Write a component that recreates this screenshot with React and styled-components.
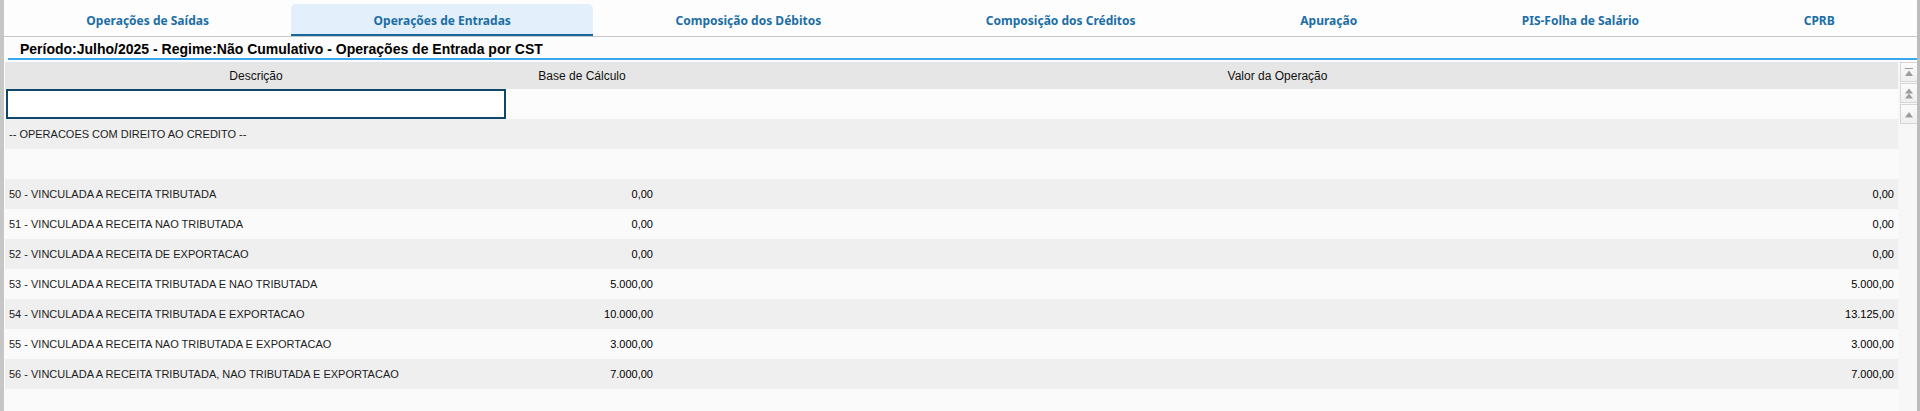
import React from "react";
import styled, { createGlobalStyle } from "styled-components";

const GlobalStyle = createGlobalStyle`
  html, body {
    margin: 0;
    padding: 0;
    background: #fcfcfc;
  }
  body {
    font-family: "Liberation Sans", Arial, sans-serif;
  }
`;

const Frame = styled.div`
  height: 411px;
  box-sizing: border-box;
  border-left: 4px solid #c6c6c6;
  border-right: 3px solid #bcbcbc;
  background: #fcfcfc;
  display: flex;
  flex-direction: column;
  overflow: hidden;
`;

const TabBar = styled.div`
  display: flex;
  height: 37px;
  padding-top: 4px;
  box-sizing: border-box;
  border-bottom: 1px solid #c8c8c8;
  background: #fdfdfd;
`;

const Tab = styled.div`
  flex: 1 1 auto;
  height: 32px;
  box-sizing: border-box;
  padding: 2px 78px 0;
  display: flex;
  align-items: center;
  justify-content: center;
  white-space: nowrap;
  font-family: "Noto Sans", "Open Sans", sans-serif;
  font-size: 12px;
  font-weight: 700;
  color: #1b6ea6;
  border-radius: 5px 5px 0 0;
  background: ${(p) => (p.$active ? "#e3effa" : "transparent")};
  border-bottom: 2px solid ${(p) => (p.$active ? "#16679c" : "transparent")};
`;

const Body = styled.div`
  flex: 1;
  display: flex;
  flex-direction: column;
  padding-left: 1px;
`;

const Title = styled.div`
  margin: 0 0 2px 3px;
  padding: 4px 0 0 12px;
  line-height: 17px;
  font-size: 14px;
  font-weight: 700;
  color: #000;
  border-bottom: 2px solid #3aa6ef;
`;

const GridArea = styled.div`
  flex: 1;
  display: flex;
`;

const Table = styled.div`
  flex: 1;
  display: flex;
  flex-direction: column;
  background: #fafafa;
`;

const Row = styled.div`
  display: grid;
  grid-template-columns: 502px 150px 1fr;
  height: ${(p) => p.$h || 30}px;
  align-items: center;
  background: ${(p) => p.$bg || "#fafafa"};
`;

const HeadCell = styled.div`
  text-align: center;
  font-size: 12px;
  color: #111;
`;

const Cell = styled.div`
  padding: 0 4px;
  font-size: 11px;
  color: ${(p) => (p.$right ? "#000" : "#1c1c1c")};
  text-align: ${(p) => (p.$right ? "right" : "left")};
  white-space: nowrap;
`;

const FilterInput = styled.input`
  width: 500px;
  height: 30px;
  margin: 0 1px;
  box-sizing: border-box;
  border: 2px solid #0f4669;
  background: #fff;
  outline: none;
  font-size: 11px;
`;

const ScrollCol = styled.div`
  width: 19px;
  background: #f7f7f7;
  display: flex;
  flex-direction: column;
  align-items: flex-end;
  gap: 1px;
`;

const ScrollBtn = styled.div`
  width: 17px;
  height: 20px;
  box-sizing: border-box;
  border: 1px solid #d6d6d6;
  border-right: none;
  background: linear-gradient(#fbfbfb, #efefef);
  display: flex;
  align-items: center;
  justify-content: center;
  color: #9c9c9c;
`;

const tabs = [
  "Operações de Saídas",
  "Operações de Entradas",
  "Composição dos Débitos",
  "Composição dos Créditos",
  "Apuração",
  "PIS-Folha de Salário",
  "CPRB",
];

const rows = [
  { desc: "-- OPERACOES COM DIREITO AO CREDITO --" },
  { desc: "" },
  { desc: "50 - VINCULADA A RECEITA TRIBUTADA", base: "0,00", valor: "0,00" },
  { desc: "51 - VINCULADA A RECEITA NAO TRIBUTADA", base: "0,00", valor: "0,00" },
  { desc: "52 - VINCULADA A RECEITA DE EXPORTACAO", base: "0,00", valor: "0,00" },
  { desc: "53 - VINCULADA A RECEITA TRIBUTADA E NAO TRIBUTADA", base: "5.000,00", valor: "5.000,00" },
  { desc: "54 - VINCULADA A RECEITA TRIBUTADA E EXPORTACAO", base: "10.000,00", valor: "13.125,00" },
  { desc: "55 - VINCULADA A RECEITA NAO TRIBUTADA E EXPORTACAO", base: "3.000,00", valor: "3.000,00" },
  { desc: "56 - VINCULADA A RECEITA TRIBUTADA, NAO TRIBUTADA E EXPORTACAO", base: "7.000,00", valor: "7.000,00" },
];

const FirstIcon = () => (
  <svg width="10" height="11" viewBox="0 0 10 11" fill="currentColor">
    <rect x="1" y="1" width="8" height="1" />
    <path d="M5 3.5 L9 9 L1 9 Z" />
  </svg>
);

const PageUpIcon = () => (
  <svg width="10" height="11" viewBox="0 0 10 11" fill="currentColor">
    <path d="M5 0.5 L9 5.5 L1 5.5 Z M5 5.5 L9 10.5 L1 10.5 Z" />
  </svg>
);

const UpIcon = () => (
  <svg width="10" height="11" viewBox="0 0 10 11" fill="currentColor">
    <path d="M5 3 L9 8.5 L1 8.5 Z" />
  </svg>
);

const App = () => {
  return (
    <>
      <GlobalStyle />
      <Frame>
        <TabBar>
          {tabs.map((t, i) => (
            <Tab key={t} $active={i === 1}>
              {t}
            </Tab>
          ))}
        </TabBar>
        <Body>
          <Title>Período:Julho/2025 - Regime:Não Cumulativo - Operações de Entrada por CST</Title>
          <GridArea>
            <Table>
              <Row $h={27} $bg="#e6e6e6">
                <HeadCell>Descrição</HeadCell>
                <HeadCell>Base de Cálculo</HeadCell>
                <HeadCell>Valor da Operação</HeadCell>
              </Row>
              <Row $bg="#fcfcfc">
                <FilterInput type="text" />
              </Row>
              {rows.map((r, i) => (
                <Row key={i} $bg={i % 2 === 0 ? "#efefef" : "#fafafa"}>
                  <Cell>{r.desc}</Cell>
                  <Cell $right>{r.base}</Cell>
                  <Cell $right>{r.valor}</Cell>
                </Row>
              ))}
            </Table>
            <ScrollCol>
              <ScrollBtn>
                <FirstIcon />
              </ScrollBtn>
              <ScrollBtn>
                <PageUpIcon />
              </ScrollBtn>
              <ScrollBtn>
                <UpIcon />
              </ScrollBtn>
            </ScrollCol>
          </GridArea>
        </Body>
      </Frame>
    </>
  );
};

export default App;
